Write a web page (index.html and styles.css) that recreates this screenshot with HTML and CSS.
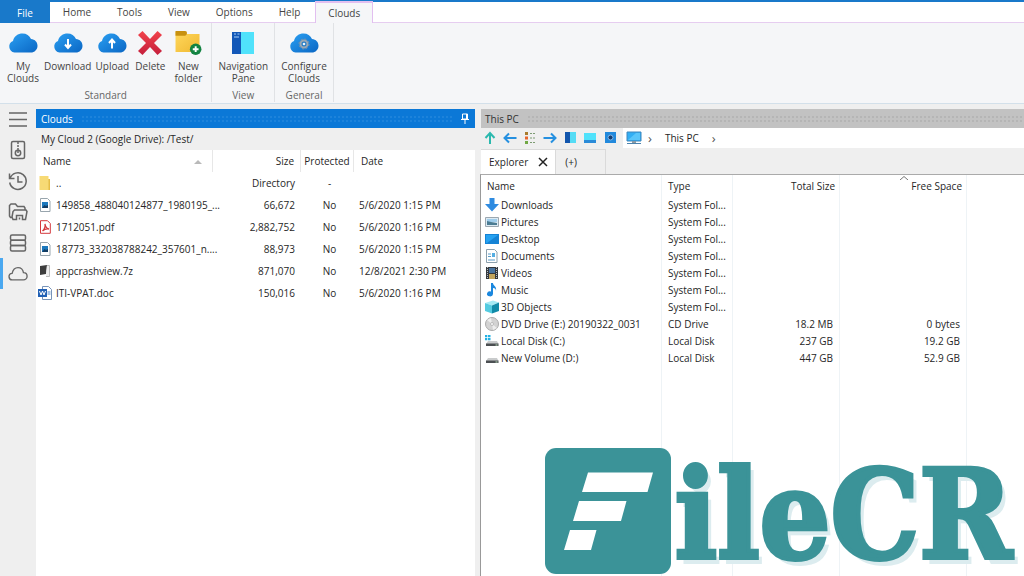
FILE: index.html
```html
<!DOCTYPE html>
<html lang="en">
<head>
<meta charset="utf-8">
<title>Clouds</title>
<link rel="stylesheet" href="styles.css">
</head>
<body>
<svg class="defs" aria-hidden="true">
  <defs>
    <linearGradient id="blue" x1="0" y1="0" x2="1" y2="1"><stop offset="0" stop-color="#2ba0f2"/><stop offset="1" stop-color="#0a66c4"/></linearGradient>
    <linearGradient id="red" x1="0" y1="0" x2="0" y2="1"><stop offset="0" stop-color="#f2434b"/><stop offset="1" stop-color="#c41f3c"/></linearGradient>
    <linearGradient id="gold" x1="0" y1="0" x2="1" y2="1"><stop offset="0" stop-color="#ffd85c"/><stop offset="1" stop-color="#f0b832"/></linearGradient>
    <symbol id="cloud" viewBox="0 0 30 22"><path d="M6.500 20.500a6 6 0 0 1-1.500-11.500C6 4 10 1.500 14.500 1.500c4 0 7 2 8.500 5.500 4 .3 6.500 3.200 6.500 6.700 0 3.800-3 6.800-6.700 6.800z" fill="url(#blue)"/></symbol>
    <symbol id="image" viewBox="0 0 14 14"><path d="M2.500.5h7l2.500 2.500v10.500h-9.500z" fill="#fff" stroke="#98a5ad"/><path d="M4 4h6v6H4z" fill="#1b78bd"/><path d="M4 10l2.500-3 1.500 1 2-1v3z" fill="#123c63"/></symbol>
    <symbol id="disk" viewBox="0 0 14 14"><path d="M3 7h9l1.500 3H1z" fill="#c9cbcc"/><path d="M1 9.500h12.500V12H1z" fill="#4b4f52"/><path d="M10.500 10.500h2v1h-2z" fill="#b8dcb9"/></symbol>
  </defs>
</svg>
<div class="app">
  <nav class="tabs">
    <button class="tab file">File</button>
    <button class="tab">Home</button>
    <button class="tab">Tools</button>
    <button class="tab">View</button>
    <button class="tab">Options</button>
    <button class="tab">Help</button>
    <button class="tab active">Clouds</button>
  </nav>
  <header class="ribbon">
    <section class="group standard">
      <div class="tools">
        <button class="tool"><svg class="big"><use href="#cloud"/></svg><span>My<br>Clouds</span></button>
        <button class="tool"><svg class="big" viewBox="0 0 30 22"><use href="#cloud"/><path d="M15 7v8M12 12.500l3 3.500 3-3.500" class="w"/></svg><span>Download</span></button>
        <button class="tool"><svg class="big" viewBox="0 0 30 22"><use href="#cloud"/><path d="M15 16.500v-8M12 11l3-3.500 3 3.500" class="w"/></svg><span>Upload</span></button>
        <button class="tool"><svg class="big tall" viewBox="0 0 24 24"><path d="M4.500 0L12 8l7.500-8L24 4l-8 8 8 8-4.500 4L12 16l-7.500 8L0 20l8-8-8-8z" fill="url(#red)"/></svg><span>Delete</span></button>
        <button class="tool"><svg class="big wide" viewBox="0 0 28 25"><path d="M1 1h10l2 2h13v19H1z" fill="url(#gold)"/><path d="M1 0h10a2 2 0 0 1 2 2c0 2-2 3-3 3H1z" fill="#c8910f"/><circle cx="22" cy="19" r="6" fill="#128342"/><path d="M22 16v6M19 19h6" class="w"/></svg><span>New<br>folder</span></button>
      </div>
      <h2>Standard</h2>
    </section>
    <section class="group view">
      <div class="tools"><button class="tool"><svg class="big tall" viewBox="0 0 24 24"><path d="M1 1h9v22H1z" fill="#1257b8"/><path d="M10 1h13v22H10z" fill="#50e2fb"/><path d="M3 3h2M6.500 3h2M3 6h5" stroke="#a5cff7"/></svg><span>Navigation<br>Pane</span></button></div>
      <h2>View</h2>
    </section>
    <section class="group general">
      <div class="tools"><button class="tool"><svg class="big" viewBox="0 0 30 22"><use href="#cloud"/><circle cx="15" cy="12" r="3.500" fill="#237cc7" stroke="#9aa7b3" stroke-width="2"/><circle cx="15" cy="12" r="5" fill="none" stroke="#8795a3" stroke-dasharray="2 1.900"/><circle cx="15" cy="12" r="1.300" fill="#e9f4ff"/></svg><span>Configure<br>Clouds</span></button></div>
      <h2>General</h2>
    </section>
  </header>
  <div class="body">
    <aside class="side">
      <button aria-label="Menu"><svg viewBox="0 0 20 20"><path d="M1 4h18M1 10.500h18M1 17h18"/></svg></button>
      <button aria-label="Archives"><svg viewBox="0 0 20 20"><rect x="3.500" y="1.500" width="13" height="17" rx="1.500"/><path d="M10 2v2M10 5v2M10 8v2"/><circle cx="10" cy="13" r="2.700"/><path d="M10 10v3"/></svg></button>
      <button aria-label="History"><svg viewBox="0 0 20 20"><path d="M2 7.500a8.300 8.300 0 1 1-.3 4M1.500 2.500v5h5M10 5v6h4.500"/></svg></button>
      <button aria-label="Folders"><svg viewBox="0 0 20 20"><path d="M4 15.500H2.500L1.500 14V3.500L3 2h4.500l2 2.500H16l1 1.500v2M4 15l1-5.500L6.500 8H18l1 1.500-1.500 8h-3v-4h-6v4H5zM11.500 17.500v-2"/></svg></button>
      <button aria-label="Storage"><svg viewBox="0 0 20 20"><rect x="2.500" y="2" width="15" height="5.300" rx="1.500"/><rect x="2.500" y="7.300" width="15" height="5.300" rx="1.500"/><rect x="2.500" y="12.600" width="15" height="5.300" rx="1.500"/></svg></button>
      <button class="on" aria-label="Clouds"><svg viewBox="0 0 22 20"><path d="M5 16.500a3.600 3.600 0 0 1-.5-7.200C5.500 5 8 3 11 3c3.500 0 5.500 2.500 6 5.500 2.500 0 4 1.800 4 4s-1.800 4-4 4z"/></svg></button>
    </aside>
    <section class="pane clouds">
      <div class="title"><h1>Clouds</h1><i class="dots"></i><svg class="pin" viewBox="0 0 10 12"><path d="M2.500 1h5v5h-5zM1 6.500h8M5 7v4M6.500 1v5" fill="none" stroke="#fff"/></svg></div>
      <div class="path">My Cloud 2 (Google Drive): /Test/</div>
      <div class="list">
      <table class="files">
        <colgroup><col class="c-name"><col class="c-size"><col class="c-prot"><col></colgroup>
        <thead><tr><th><div class="sort"><span>Name</span><svg viewBox="0 0 8 5"><path d="M0 5l4-4 4 4z" fill="#b9b9b9"/></svg></div></th><th class="r">Size</th><th class="c">Protected</th><th>Date</th></tr></thead>
        <tbody>
          <tr><td><div class="cell"><svg viewBox="0 0 14 14"><path d="M1.500 0h9v3h1.500v11H1.500z" fill="#f7da75"/><path d="M10.500 3H12v11h-1.500z" fill="#e5bd48"/></svg>..</div></td><td class="r">Directory</td><td class="m">-</td><td></td></tr>
          <tr><td><div class="cell"><svg><use href="#image"/></svg>149858_488040124877_1980195_...</div></td><td class="r">66,672</td><td class="m">No</td><td>5/6/2020 1:15 PM</td></tr>
          <tr><td><div class="cell"><svg viewBox="0 0 14 14"><path d="M2.500.700h7l2.800 2.800v9.800H2.500z" fill="#fff" stroke="#d4383c"/><path d="M4.500 11c2-2 3-4.500 2.500-7 .5 3 2 4.500 4 5-2.500-.5-4.500 0-6.500 2z" fill="none" stroke="#d4383c" stroke-width="1.300"/></svg>1712051.pdf</div></td><td class="r">2,882,752</td><td class="m">No</td><td>5/6/2020 1:16 PM</td></tr>
          <tr><td><div class="cell"><svg><use href="#image"/></svg>18773_332038788242_357601_n....</div></td><td class="r">88,973</td><td class="m">No</td><td>5/6/2020 1:15 PM</td></tr>
          <tr><td><div class="cell"><svg viewBox="0 0 14 14"><path d="M2 2l7-1-1 9-6 1z" fill="#3d3d3d"/><path d="M9 1.500h2.500v11H8" fill="#eee" stroke="#bbb"/></svg>appcrashview.7z</div></td><td class="r">871,070</td><td class="m">No</td><td>12/8/2021 2:30 PM</td></tr>
          <tr><td><div class="cell"><svg viewBox="0 0 14 14"><path d="M4.500.500h6l3 3v10h-9z" fill="#fff" stroke="#7894b9"/><path d="M9.500 6h3M9.500 8h3" stroke="#4c87cc"/><path d="M0 3h9v8H0z" fill="#2261b5"/><path d="M1.500 5l1.500 4 1.500-4L6 9l1.500-4" fill="none" stroke="#fff"/></svg>ITI-VPAT.doc</div></td><td class="r">150,016</td><td class="m">No</td><td>5/6/2020 1:16 PM</td></tr>
        </tbody>
      </table>
      </div>
    </section>
    <section class="pane pc">
      <div class="title grey"><h1>This PC</h1><i class="dots"></i></div>
      <div class="bar">
        <div class="nav">
          <button aria-label="Up"><svg viewBox="0 0 14 14"><path d="M7 13V2.500M2.500 7L7 2l4.500 5" fill="none" stroke="#2bb9ae" stroke-width="2"/></svg></button>
          <button aria-label="Back"><svg viewBox="0 0 14 14"><path d="M13.500 7H2M6 2.500L1.500 7 6 11.500" fill="none" stroke="#2590e0" stroke-width="2"/></svg></button>
          <button aria-label="Tree"><svg viewBox="0 0 14 14"><path d="M2 1h3v3H2z" fill="#a87b2c"/><path d="M2 5.500h3v3H2z" fill="#e8642c"/><path d="M2 10h3v3H2z" fill="#71a844"/><path d="M7 2.500h5M7 7h5M7 11.500h5" stroke="#7c9b72" stroke-dasharray="2 1"/></svg></button>
          <button aria-label="Forward"><svg viewBox="0 0 14 14"><path d="M.5 7H12M8 2.500l4.500 4.500L8 11.500" fill="none" stroke="#2590e0" stroke-width="2"/></svg></button>
          <button aria-label="Navigation pane"><svg viewBox="0 0 14 14"><path d="M2 1h5v11H2z" fill="#1256ad"/><path d="M7 1h6v11H7z" fill="#55dcf5"/></svg></button>
          <button aria-label="Preview"><svg viewBox="0 0 14 14"><path d="M1 2h12v7H1z" fill="#50e2fb"/><path d="M1 9h12v3H1z" fill="#2a8bd8"/></svg></button>
          <button aria-label="Settings"><svg viewBox="0 0 14 14"><path d="M2 1h11v11H2z" fill="#2289dc"/><circle cx="7.500" cy="6.500" r="2.500" fill="#153d70" stroke="#83b7e8"/></svg></button>
        </div>
        <div class="address"><svg class="pcicon" viewBox="0 0 16 14"><path d="M1 1h14v9H1z" fill="#31aef4" stroke="#3f86bc"/><path d="M2 9l8-7h4v7z" fill="#58c5fa"/><path d="M6 10h4v2H6z" fill="#8a9aa5"/><path d="M1 12.500h14" stroke="#4d83ad"/></svg><span class="chev">›</span><a href="#">This PC</a><span class="chev">›</span></div>
      </div>
      <div class="subtabs"><button class="sub sel">Explorer<svg viewBox="0 0 10 10"><path d="M1 1l8 8M9 1L1 9" stroke="#222" stroke-width="1.500"/></svg></button><button class="sub">(+)</button></div>
      <div class="list drives-box">
      <table class="drives">
        <colgroup><col class="d-name"><col class="d-type"><col class="d-total"><col class="d-free"><col></colgroup>
        <thead><tr><th>Name</th><th>Type</th><th class="r">Total Size</th><th class="r asc"><svg viewBox="0 0 8 4"><path d="M0 4l4-3.500L8 4" fill="none" stroke="#777"/></svg>Free Space</th><th></th></tr></thead>
        <tbody>
          <tr><td><div class="cell"><svg viewBox="0 0 14 14"><path d="M4.500 0h5v6H14l-7 7.500L0 6h4.500z" fill="#2f8be0"/></svg>Downloads</div></td><td>System Fol...</td><td></td><td></td><td></td></tr>
          <tr><td><div class="cell"><svg viewBox="0 0 14 14"><path d="M.5 2.500h13v9H.5z" fill="#dceaf3" stroke="#9ba7b0"/><path d="M2 4h10v3H2z" fill="#9fcdec"/><path d="M2 6l4 1 6 1v2H2z" fill="#4b7c93"/></svg>Pictures</div></td><td>System Fol...</td><td></td><td></td><td></td></tr>
          <tr><td><div class="cell"><svg viewBox="0 0 14 14"><path d="M0 2h14v10H0z" fill="#1583d5"/><path d="M1 3h12L2 11H1z" fill="#26a2f1"/></svg>Desktop</div></td><td>System Fol...</td><td></td><td></td><td></td></tr>
          <tr><td><div class="cell"><svg viewBox="0 0 14 14"><path d="M1.500.500h8l2.500 2.500v10.500H1.500z" fill="#fff" stroke="#8ca0ad"/><path d="M3 5h3M3 7.500h3M3 11h7" stroke="#5a9bc7"/><path d="M7 4h3v4H7z" fill="#55aee3"/></svg>Documents</div></td><td>System Fol...</td><td></td><td></td><td></td></tr>
          <tr><td><div class="cell"><svg viewBox="0 0 14 14"><path d="M1 1h12v12H1z" fill="#34383d"/><path d="M4 2h6v5H4z" fill="#47739f"/><path d="M4 8h6v5H4z" fill="#c1a45c"/><path d="M2.500 1v12M11.500 1v12" stroke="#b9bec2" stroke-dasharray="1 1"/></svg>Videos</div></td><td>System Fol...</td><td></td><td></td><td></td></tr>
          <tr><td><div class="cell"><svg viewBox="0 0 14 14"><path d="M6 0h2c0 3 4 3 3 8 0-2-1-3-3-3v6a3 2.500 0 1 1-2-2.500z" fill="#1a87de"/></svg>Music</div></td><td>System Fol...</td><td></td><td></td><td></td></tr>
          <tr><td><div class="cell"><svg viewBox="0 0 14 14"><path d="M0 3l8-2.500 6 2-7 3z" fill="#a5eaf4"/><path d="M0 3l7 2.500v8L0 11z" fill="#54cbe0"/><path d="M7 5.500l7-3V11l-7 2.500z" fill="#118ba8"/></svg>3D Objects</div></td><td>System Fol...</td><td></td><td></td><td></td></tr>
          <tr><td><div class="cell"><svg viewBox="0 0 14 14"><circle cx="7" cy="7" r="6.500" fill="#d3d3d3" stroke="#aaa"/><path d="M7 7L2 3l4-2zM7 7l5 4-4 2z" fill="#eee"/><circle cx="7" cy="7" r="1.500" fill="#fff" stroke="#bbb"/></svg>DVD Drive (E:) 20190322_0031</div></td><td>CD Drive</td><td class="r">18.2 MB</td><td class="r">0 bytes</td><td></td></tr>
          <tr><td><div class="cell"><svg viewBox="0 0 14 14"><use href="#disk"/><path d="M0 1h2.300v2.300H0zM3 1h2.500v2.300H3zM0 4h2.300v2.300H0zM3 4h2.500v2.300H3z" fill="#22b1e4"/></svg>Local Disk (C:)</div></td><td>Local Disk</td><td class="r">237 GB</td><td class="r">19.2 GB</td><td></td></tr>
          <tr><td><div class="cell"><svg><use href="#disk"/></svg>New Volume (D:)</div></td><td>Local Disk</td><td class="r">447 GB</td><td class="r">52.9 GB</td><td></td></tr>
          <tr class="rest"><td></td><td></td><td></td><td></td><td></td></tr>
        </tbody>
      </table>
      </div>
    </section>
  </div>
  <div class="mark"><svg viewBox="0 0 126 126"><rect width="126" height="126" rx="11" fill="#3b9398"/><path d="M43 24.500h65l-5.500 19.500H37zM34 53h47.500l-5.500 20H28zM25 82h26.500L46 102H19z" fill="#fff"/></svg><span>ileCR</span></div>
</div>
</body>
</html>
```

FILE: styles.css
```css
* { box-sizing: border-box; }
body { margin: 0; font: 10px/12px "Open Sans", "Noto Sans", sans-serif; color: #262626; }
button { font: inherit; color: inherit; background: none; border: 0; padding: 0; margin: 0; }
h1, h2 { margin: 0; font: inherit; }
a { color: inherit; text-decoration: none; }
svg { flex: none; }
.defs { position: absolute; width: 0; height: 0; }
.app { position: relative; display: flex; flex-direction: column; height: 100vh; overflow: hidden; background: #efefef; }

.tabs { display: flex; height: 23px; border-top: 2px solid #1979ca; border-bottom: 1px solid #e6cdf0; background: #fff; color: #444; }
.tab { padding: 0 13px; }
.tab.file { background: #1979ca; color: #fff; padding: 0 17px; margin-bottom: -1px; }
.tab.active { background: #f5f6f8; border: 1px solid #e2bff0; border-top-width: 2px; border-bottom: 0; margin: -1px 0 -1px 2px; padding: 0 12px; }

.ribbon { display: flex; height: 81px; padding-bottom: 1px; background: #f5f6f8; border-bottom: 1px solid #d3e0ea; color: #444; }
.group { display: flex; flex-direction: column; justify-content: space-between; align-items: center; padding: 8px 6px 0; border-right: 1px solid #e0e2e5; }
.group h2 { color: #666; line-height: 14px; }
.tools { display: flex; gap: 4px; }
.tool { display: flex; flex-direction: column; align-items: center; gap: 5px; min-width: 34px; line-height: 12px; }
.big { width: 30px; height: 24px; }
.big.wide { width: 28px; }
.w { fill: none; stroke: #fff; stroke-width: 2; }

.body { flex: 1; min-height: 0; display: flex; padding-top: 5px; }
.side { width: 36px; display: flex; flex-direction: column; }
.side button { height: 31px; display: flex; align-items: center; justify-content: center; border-left: 3px solid transparent; padding-right: 4px; }
.side button:first-child { height: 20px; margin-bottom: 5px; }
.side .on { border-color: #4aa8f0; }
.side svg { width: 20px; height: 20px; fill: none; stroke: #666; stroke-width: 1.5; }

.pane { display: flex; flex-direction: column; min-width: 0; }
.clouds { flex: 439; margin-right: 5px; }
.pc { flex: 544; }
.title { display: flex; align-items: center; height: 19px; padding: 0 5px; gap: 8px; background: #0b78d7; color: #fff; }
.title.grey { background: #c2c2c2; color: #333; margin-left: 1px; padding: 0 0 0 4px; }
.dots { flex: 1; height: 8px; background: radial-gradient(circle, #1d83db 1px, transparent 1px) 0 0 / 4px 4px; }
.grey .dots { background-image: radial-gradient(circle, #b5b5b5 1px, transparent 1px); }
.pin { width: 10px; height: 12px; }
.path { height: 22px; line-height: 22px; padding-left: 5px; }
.list { flex: 1; min-height: 0; background: #fff; overflow: hidden; }

table { width: 100%; border-collapse: separate; border-spacing: 0; table-layout: fixed; white-space: nowrap; }
th { font-weight: 400; text-align: left; }
th, td { padding: 0; }
th.r, td.r { text-align: right; }
th.c, td.m { text-align: center; }
.cell { display: flex; align-items: center; }
.cell svg { width: 14px; height: 14px; }

.c-name { width: 177px; }
.c-size { width: 88px; }
.c-prot { width: 53px; }
.files th { height: 22px; border-right: 1px solid #e7e7e7; padding: 0 6px 0 7px; }
.files th.c { padding: 0; }
.files th:last-child, .drives th:last-child { border-right: 0; }
.files td { height: 22px; padding: 0 6px 0 5px; }
.files td.m { padding: 0 0 0 4px; }
.files td:first-child { padding: 0 0 0 2px; }
.files .cell { gap: 4px; }
.sort { display: flex; justify-content: space-between; align-items: center; padding-right: 4px; }
.sort svg { width: 8px; height: 5px; }

.bar { display: flex; height: 20px; }
.nav { display: flex; align-items: center; gap: 6px; padding: 0 4px 0 3px; width: 143px; }
.nav button, .nav svg { width: 14px; height: 14px; display: block; }
.address { flex: 1; display: flex; align-items: center; gap: 6px; padding-left: 3px; background: #fff; }
.address a { padding: 0 7px; }
.pcicon { width: 16px; height: 14px; }
.chev { font-size: 13px; color: #555; }
.subtabs { display: flex; height: 26px; padding-top: 1px; margin-left: 1px; }
.sub { display: flex; align-items: center; gap: 10px; padding: 0 28px 0 9px; border-right: 1px solid #dadada; border-top: 1px solid #dadada; }
.sub.sel { background: #fff; padding: 0 7px 0 8px; }
.sub svg { width: 10px; height: 10px; }
.drives-box { border-left: 1px solid #999; border-top: 1px solid #aaa; }
.drives { height: 100%; }
.d-name { width: 181px; }
.d-type { width: 71px; }
.d-total { width: 107px; }
.d-free { width: 127px; }
.drives th, .drives td { border-right: 1px solid #eef3f6; padding: 0 6px; }
.drives td:last-child { border-right: 0; }
.drives th { height: 21px; padding-right: 4px; }
.drives td { height: 17px; }
.drives td:first-child { padding: 0 0 0 4px; }
.drives .cell { gap: 2px; }
.drives .rest td { height: auto; }
.asc { position: relative; }
.asc svg { position: absolute; left: 60px; top: 1px; width: 8px; height: 4px; }

.mark { position: absolute; right: 12px; bottom: 2px; display: flex; align-items: flex-end; gap: 4px; pointer-events: none; }
.mark svg { width: 126px; height: 126px; }
.mark span { font: 700 124px/118px "DejaVu Serif Condensed", "DejaVu Serif", serif; color: #3b9398; -webkit-text-stroke: 4px #3b9398; text-shadow: 5px 6px 0 #dcecef; }
```
